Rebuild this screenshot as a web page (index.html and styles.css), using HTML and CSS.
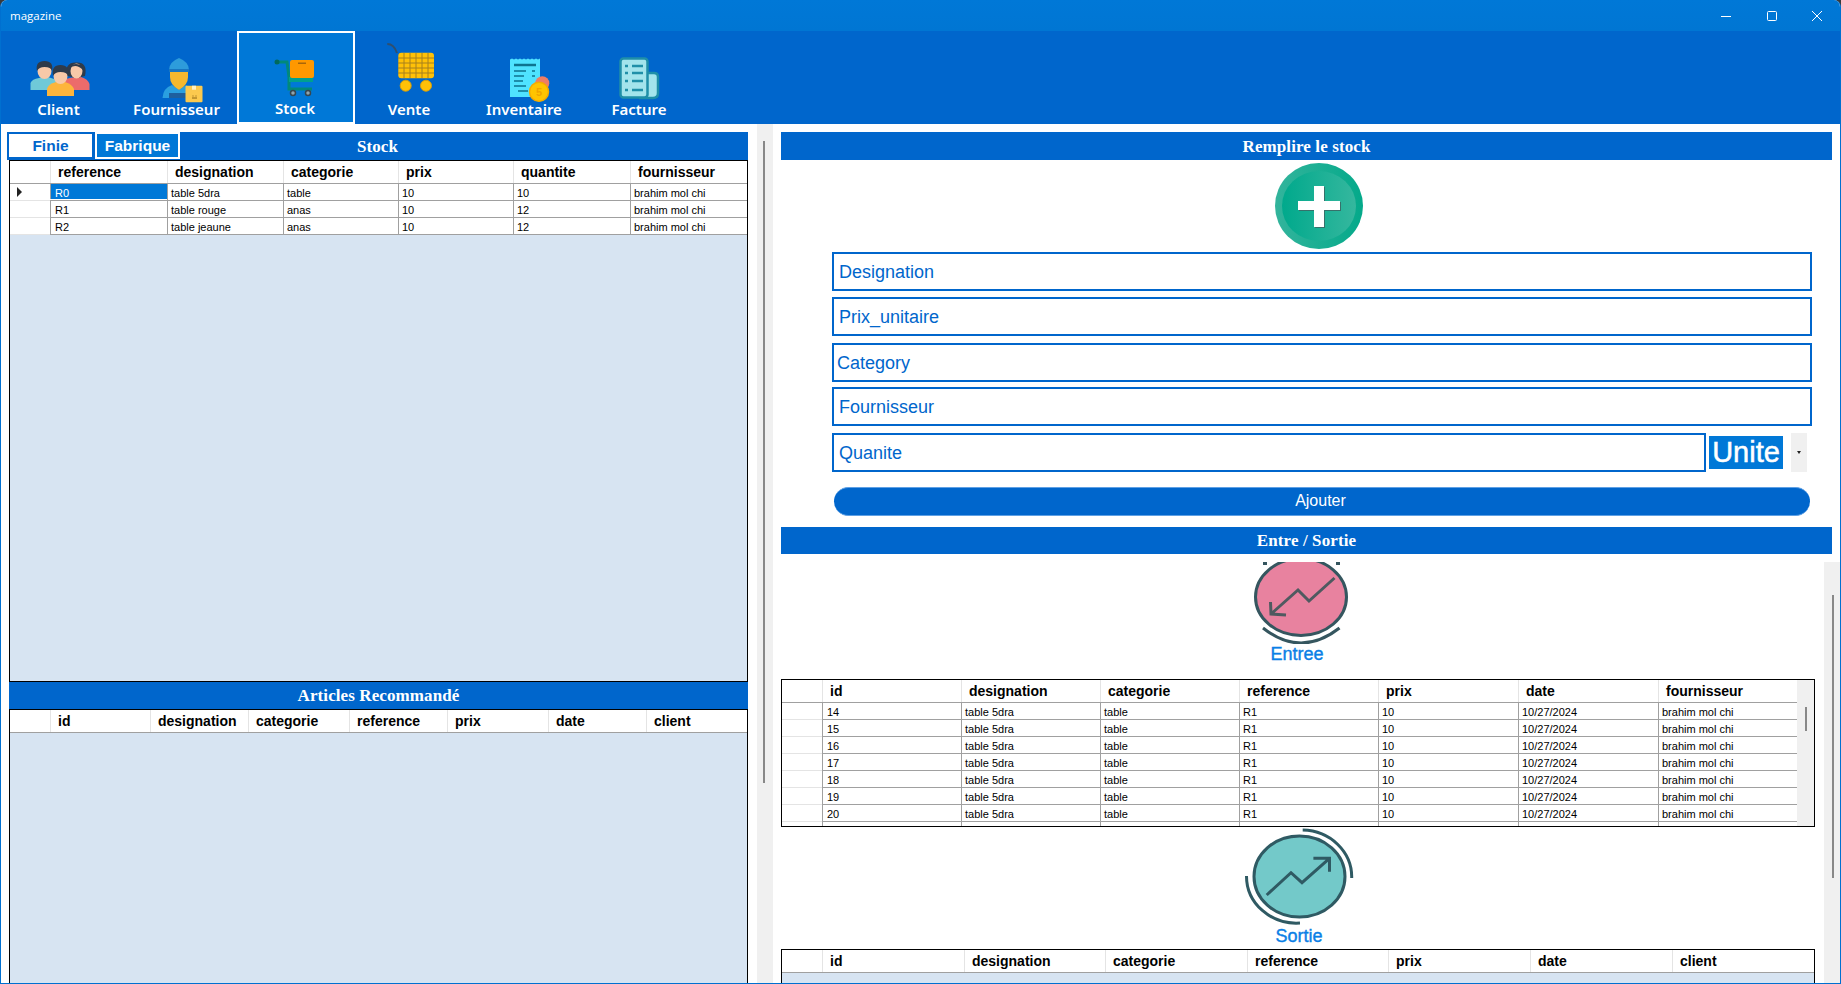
FILE: index.html
```html
<!DOCTYPE html>
<html lang="fr">
<head>
<meta charset="utf-8">
<title>magazine</title>
<link rel="stylesheet" href="styles.css">
</head>
<body>
<div class="app">
  <header class="titlebar">
    <span class="title">magazine</span>
    <div class="winctl">
      <span class="winbtn"><svg width="10" height="10" viewBox="0 0 10 10"><path d="M0 5.5H10" stroke="#fff" fill="none"/></svg></span>
      <span class="winbtn"><svg width="10" height="10" viewBox="0 0 10 10"><rect x=".5" y=".5" width="9" height="9" rx="1" stroke="#fff" fill="none"/></svg></span>
      <span class="winbtn"><svg width="10" height="10" viewBox="0 0 10 10"><path d="M0 0L10 10M10 0L0 10" stroke="#fff" fill="none"/></svg></span>
    </div>
  </header>

  <nav class="nav">
    <div class="tab t-client">
      <svg class="navicon" viewBox="0 0 60 57">
        <path d="M32 47V39Q33 36 40 35L45 34H51Q58 36 59.500 41V47Z" fill="#ec6b6b"/>
        <path d="M37 33Q34 19 46.500 19.500Q58 19 55 33L51 34Q46 36 42 34Z" fill="#2f3b4a"/>
        <ellipse cx="46.500" cy="28" rx="6" ry="7.500" fill="#f8c9a8"/>
        <path d="M40 25Q46 20 53 27Q54 21 46 21Q40 21 40 25Z" fill="#2f3b4a"/>
        <path d="M.5 47V40Q2 36 9 35L12 34H18L24 36Q28 38 28 47Z" fill="#6fc9d8"/>
        <ellipse cx="14.500" cy="28" rx="7" ry="8" fill="#f8c9a8"/>
        <path d="M7 28Q5 18 14.500 18Q24 18 22 28Q21 24 14.500 24Q9 24 7 28Z" fill="#2f3b4a"/>
        <path d="M17 53V46Q18 41 26 39H35Q42 41 44 46V53Z" fill="#fdb53c"/>
        <ellipse cx="30.500" cy="33" rx="7" ry="8" fill="#f8c9a8"/>
        <path d="M23 33Q21 22 30.500 22Q40 22 38 33Q37 29 30.500 29Q25 29 23 33Z" fill="#2f3b4a"/>
      </svg>
      <span class="tablabel">Client</span>
    </div>
    <div class="tab t-four">
      <svg class="navicon" viewBox="0 0 60 57">
        <path d="M14.500 55Q15 45 24 42L31 47L38 42Q42 44 44 47V55Z" fill="#2a9fe0"/>
        <rect x="21" y="50" width="17" height="5" fill="#1e5f9e"/>
        <path d="M22 27H40V34Q40 42 31 47Q22 42 22 34Z" fill="#f5b82e"/>
        <path d="M21 27Q21 19 31 15Q41 19 41 27Z" fill="#2d9cdb"/>
        <rect x="21" y="26" width="20" height="3" fill="#1976c0"/>
        <rect x="37.500" y="42.700" width="17" height="16.600" rx="1" fill="#fbc94e"/>
        <rect x="44" y="42.700" width="4" height="4" fill="#fff0c0"/>
        <path d="M44 55H49M45 52.500V53.500M48 52.500V53.500" stroke="#8a6414" fill="none"/>
      </svg>
      <span class="tablabel">Fournisseur</span>
    </div>
    <div class="tab t-stock active">
      <svg class="navicon" viewBox="0 0 60 57">
        <path d="M12 19H21L23 34V46H46" stroke="#00897b" stroke-width="3" fill="none"/>
        <circle cx="11" cy="19" r="2.500" fill="#00695c"/>
        <rect x="23" y="34" width="24" height="5" fill="#00a08f"/>
        <rect x="24" y="17" width="24" height="18" rx="2" fill="#ff9800"/>
        <rect x="32" y="19.500" width="8" height="1.500" fill="#a8660a"/>
        <circle cx="27" cy="50" r="2.500" fill="#90a4ae" stroke="#37474f" stroke-width="1.500"/>
        <circle cx="42" cy="50" r="2.500" fill="#90a4ae" stroke="#37474f" stroke-width="1.500"/>
      </svg>
      <span class="tablabel">Stock</span>
    </div>
    <div class="tab t-vente">
      <svg class="navicon" viewBox="0 0 60 57">
        <path d="M8.300 1Q15 1 18 10" stroke="#2f4f6f" stroke-width="2" fill="none"/>
        <rect x="19.300" y="9.700" width="35.700" height="25.600" rx="3" fill="#ffc107"/>
        <path d="M25 10V35M31 10V35M37 10V35M43 10V35M49 10V35M19 15H55M19 20H55M19 25H55M19 30H55" stroke="#a6801e" fill="none"/>
        <circle cx="26.700" cy="42.700" r="5.500" fill="#ffc107" stroke="#d99f0a"/>
        <circle cx="47" cy="42.700" r="5.500" fill="#ffc107" stroke="#d99f0a"/>
      </svg>
      <span class="tablabel">Vente</span>
    </div>
    <div class="tab t-inv">
      <svg class="navicon" viewBox="0 0 60 57">
        <path d="M16 16.500L18 15.500L20 16.500L22 15.500L24 16.500L26 15.500L28 16.500L30 15.500L32 16.500L34 15.500L36 16.500L38 15.500L40 16.500L42 15.500L44 16.500L46 15.500V54H16Z" fill="#4fe3ff"/>
        <path d="M20 22H42" stroke="#0e7490" stroke-width="2.500" fill="none"/>
        <path d="M20 28H32M38 28H41M20 33H30M38 33H41M20 38H29M20 43H32M24 48H34" stroke="#0e7490" stroke-width="1.700" fill="none"/>
        <circle cx="48.300" cy="40.300" r="7" fill="#ef7d64"/>
        <circle cx="45" cy="48.700" r="9.500" fill="#ffc400" stroke="#f5ab00" stroke-width="1.500"/>
        <text class="coin" x="45" y="53">5</text>
      </svg>
      <span class="tablabel">Inventaire</span>
    </div>
    <div class="tab t-fact">
      <svg class="navicon" viewBox="0 0 60 57">
        <path d="M39 30H45Q49 30 49 34V50Q49 55 44 55H30" fill="#a3e4ec" stroke="#1f8fa8" stroke-width="2.500"/>
        <rect x="11.500" y="15.500" width="27" height="39" rx="3" fill="#a3e4ec" stroke="#1f8fa8" stroke-width="2.500"/>
        <path d="M16 23H19M23 23H34M16 30H19M23 30H34M16 38H19M23 38H34M16 47H19M23 47H34" stroke="#1f8fa8" stroke-width="2.300" fill="none"/>
      </svg>
      <span class="tablabel">Facture</span>
    </div>
  </nav>

  <main class="main">
    <section class="left">
      <div class="bar bar-stock">
        <div class="modes">
          <span class="mode mode-on">Finie</span>
          <span class="mode mode-off">Fabrique</span>
        </div>
        <span class="bar-title">Stock</span>
      </div>
      <div class="grid grid-stock">
        <div class="row head cols-stock">
          <span class="corner"></span><b>reference</b><b>designation</b><b>categorie</b><b>prix</b><b>quantite</b><b>fournisseur</b>
        </div>
        <div class="row cols-stock">
          <span class="rowh"><i class="arrow"></i></span><span class="sel">R0</span><span>table 5dra</span><span>table</span><span>10</span><span>10</span><span>brahim mol chi</span>
        </div>
        <div class="row cols-stock">
          <span class="rowh"></span><span class="first">R1</span><span>table rouge</span><span>anas</span><span>10</span><span>12</span><span>brahim mol chi</span>
        </div>
        <div class="row cols-stock">
          <span class="rowh"></span><span class="first">R2</span><span>table jeaune</span><span>anas</span><span>10</span><span>12</span><span>brahim mol chi</span>
        </div>
      </div>
      <div class="bar bar-reco"><span class="bar-title">Articles Recommandé</span></div>
      <div class="grid grid-reco">
        <div class="row head cols-reco">
          <span class="corner"></span><b>id</b><b>designation</b><b>categorie</b><b>reference</b><b>prix</b><b>date</b><b>client</b>
        </div>
      </div>
    </section>

    <div class="splitter"><span class="splitline"></span></div>

    <section class="right">
      <div class="form">
        <div class="bar"><span class="bar-title">Remplire le stock</span></div>
        <svg class="plus" viewBox="0 0 88 86">
          <defs>
            <linearGradient id="pg" x1="0" x2="1" y1="0" y2="0">
              <stop offset="0" stop-color="#00a98c"/>
              <stop offset="1" stop-color="#35b79e"/>
            </linearGradient>
            <linearGradient id="po" x1="0" x2="1" y1="0" y2="0">
              <stop offset="0" stop-color="#33b49c"/>
              <stop offset="1" stop-color="#04a98a"/>
            </linearGradient>
          </defs>
          <ellipse cx="44" cy="43" rx="44" ry="43" fill="url(#po)"/>
          <ellipse cx="44" cy="43" rx="37" ry="35" fill="url(#pg)"/>
          <path d="M39 23H49V38H65V47H49V64H39V47H23V38H39Z" fill="#37706a" transform="translate(1 1)"/>
          <path d="M39 23H49V38H65V47H49V64H39V47H23V38H39Z" fill="#fff"/>
        </svg>
        <div class="fields">
          <div class="field">Designation</div>
          <div class="field">Prix_unitaire</div>
          <div class="field field-cat">Category</div>
          <div class="field field-four">Fournisseur</div>
          <div class="qty">
            <div class="field field-qty">Quanite</div>
            <div class="unit">Unite</div>
            <div class="drop"><i class="droparrow"></i></div>
          </div>
        </div>
        <div class="add">Ajouter</div>
        <div class="bar bar-io"><span class="bar-title">Entre / Sortie</span></div>
      </div>

      <div class="scroller">
        <div class="scrollbody">
          <svg class="trend-in" viewBox="0 0 110 82">
            <path d="M17 1.500H21M90 1.500H94" stroke="#35565f" stroke-width="3" fill="none"/>
            <ellipse cx="55" cy="35" rx="45.500" ry="38.500" fill="#e8829f" stroke="#35565f" stroke-width="3"/>
            <path d="M17 66Q55 96 93.500 66" stroke="#35565f" stroke-width="3" fill="none"/>
            <path d="M88.500 16L63 39L52 28L25 52M24.500 40L25 52L40 53" stroke="#4f5a60" stroke-width="3" fill="none"/>
          </svg>
          <div class="trend-label lab-in">Entree</div>

          <div class="grid grid-in">
            <div class="grid-rows">
              <div class="row head cols-in">
                <span class="corner"></span><b>id</b><b>designation</b><b>categorie</b><b>reference</b><b>prix</b><b>date</b><b>fournisseur</b>
              </div>
              <div class="row cols-in"><span class="rowh"></span><span class="first">14</span><span>table 5dra</span><span>table</span><span>R1</span><span>10</span><span>10/27/2024</span><span>brahim mol chi</span></div>
              <div class="row cols-in"><span class="rowh"></span><span class="first">15</span><span>table 5dra</span><span>table</span><span>R1</span><span>10</span><span>10/27/2024</span><span>brahim mol chi</span></div>
              <div class="row cols-in"><span class="rowh"></span><span class="first">16</span><span>table 5dra</span><span>table</span><span>R1</span><span>10</span><span>10/27/2024</span><span>brahim mol chi</span></div>
              <div class="row cols-in"><span class="rowh"></span><span class="first">17</span><span>table 5dra</span><span>table</span><span>R1</span><span>10</span><span>10/27/2024</span><span>brahim mol chi</span></div>
              <div class="row cols-in"><span class="rowh"></span><span class="first">18</span><span>table 5dra</span><span>table</span><span>R1</span><span>10</span><span>10/27/2024</span><span>brahim mol chi</span></div>
              <div class="row cols-in"><span class="rowh"></span><span class="first">19</span><span>table 5dra</span><span>table</span><span>R1</span><span>10</span><span>10/27/2024</span><span>brahim mol chi</span></div>
              <div class="row cols-in"><span class="rowh"></span><span class="first">20</span><span>table 5dra</span><span>table</span><span>R1</span><span>10</span><span>10/27/2024</span><span>brahim mol chi</span></div>
              <div class="row cols-in"><span class="rowh"></span><span class="first"></span><span></span><span></span><span></span><span></span><span></span><span></span></div>
            </div>
            <div class="vbar"><span class="vthumb"></span></div>
          </div>

          <svg class="trend-out" viewBox="0 0 120 98">
            <path d="M62.700 2A50 47 0 0 1 111.700 50M6.500 48A50 47 0 0 0 60 95" stroke="#2f5a63" stroke-width="3" fill="none"/>
            <ellipse cx="59.500" cy="48.500" rx="45.500" ry="40.500" fill="#73c9c9" stroke="#2f5a63" stroke-width="3"/>
            <path d="M26.700 67L51 44.700L62 54.700L89.500 30.300M73.400 30.300H89.500V43.700" stroke="#2f5a63" stroke-width="3" fill="none"/>
          </svg>
          <div class="trend-label lab-out">Sortie</div>

          <div class="grid grid-out">
            <div class="row head cols-out">
              <span class="corner"></span><b>id</b><b>designation</b><b>categorie</b><b>reference</b><b>prix</b><b>date</b><b>client</b>
            </div>
          </div>
        </div>
        <div class="pagebar"><span class="pagethumb"></span></div>
      </div>
    </section>
  </main>
</div>
</body>
</html>
```

FILE: styles.css
```css
* { box-sizing: border-box; }
html, body { margin: 0; height: 100%; background: #3a3a3a; }
body { overflow: hidden; }
.app {
  width: 1841px; height: 984px;
  display: flex; flex-direction: column;
  background: #fff;
  border: 1px solid #0070d0;
  border-top: 0;
  border-radius: 7px 7px 0 0;
  overflow: hidden;
  font-family: "Liberation Sans", Arial, sans-serif;
}

/* title bar */
.titlebar {
  height: 31px; flex: none;
  display: flex; align-items: center; justify-content: space-between;
  background: linear-gradient(#0078d7, #0076d3);
  color: #fff;
  padding-left: 9px;
}
.title { font: 11.5px "Open Sans", sans-serif; }
.winctl { display: flex; }
.winbtn { width: 45.500px; height: 31px; display: flex; align-items: center; justify-content: center; }
.winbtn svg { display: block; }

/* nav */
.nav { height: 93px; flex: none; display: flex; background: #0066cc; }
.tab {
  display: flex; flex-direction: column; align-items: center;
  padding-top: 12px;
  color: #fff;
}
.t-client { width: 115px; }
.t-four { width: 121px; }
.t-stock { width: 118px; }
.t-vente { width: 108px; }
.t-inv { width: 122px; }
.t-fact { width: 108px; }
.active { background: #0078d7; border: 2px solid #fff; padding-top: 10px; }
.navicon { width: 60px; height: 57px; display: block; overflow: visible; flex: none; }
.t-client .navicon, .t-four .navicon { margin-left: 2px; }
.tablabel { font: 600 15px/16px "Noto Sans", sans-serif; white-space: nowrap; margin-top: 1px; }
.active .tablabel { margin: 0 2px 0 0; }
.coin { font: bold 11px "Liberation Sans", sans-serif; fill: #f0a400; text-anchor: middle; }

/* main */
.main { flex: 1; min-height: 0; display: flex; }
.left { width: 741px; margin-left: 6px; padding-top: 8px; display: flex; flex-direction: column; flex: none; }
.splitter { width: 16px; margin-left: 9px; background: #f0f0f0; flex: none; padding: 17px 0 0 6px; }
.splitline { display: block; width: 2px; height: 642px; background: #888; }
.right { flex: 1; min-width: 0; display: flex; flex-direction: column; padding-top: 8px; }

/* bars */
.bar {
  height: 28px; flex: none;
  display: grid; align-items: center; justify-items: center;
  background: #0066cc; color: #fff;
}
.bar > * { grid-area: 1 / 1; }
.bar-title { font: bold 17px/1 "Liberation Serif", serif; letter-spacing: .1px; }
.bar-reco { height: 29px; margin-left: 2px; border-top: 1px solid #000; border-bottom: 1px solid #000; }
.modes { justify-self: start; display: flex; align-self: stretch; }
.mode {
  font: bold 15.500px/1 "Liberation Sans", sans-serif;
  display: flex; align-items: center; justify-content: center;
}
.mode-on { width: 87px; height: 27px; background: #fff; color: #0066cc; border: 2px solid #0066cc; }
.mode-off { width: 85px; margin-left: 1px; height: 27px; background: #0078d7; color: #fff; border: 2px solid #fff; }

/* data grids */
.grid { background: #d7e4f2; border: 1px solid #000; overflow: hidden; }
.grid-stock { height: 521px; margin-left: 2px; flex: none; border-bottom: 0; }
.grid-reco { flex: 1; margin-left: 2px; border-top: 0; border-bottom: 0; }
.row {
  display: grid; height: 17px;
  background: #fff;
  font-size: 11px; line-height: 17px; color: #000;
  border-bottom: 1px solid #a0a0a0;
}
.row > span { padding: 1px 0 0 3px; border-left: 1px solid #a0a0a0; white-space: nowrap; overflow: hidden; }
.row > .rowh { border-left: 0; padding: 0; display: flex; align-items: center; border-bottom: 1px solid #e4e4e4; margin-bottom: -1px; background: #fff; }
.row > .first { padding-left: 4px; }
.row > .sel { background: #0078d7; color: #fff; padding-left: 4px; margin-bottom: 1px; }
.head { height: 23px; font-size: 14px; line-height: 23px; border-bottom: 1px solid #a0a0a0; }
.head b { padding-left: 7px; border-left: 1px solid #e4e4e4; white-space: nowrap; overflow: hidden; }
.head > .corner { border-left: 0; padding: 0; border-right: 1px solid #a0a0a0; margin-right: -1px; }
.arrow { display: block; margin-left: 7px; width: 0; height: 0; border-left: 5px solid #222; border-top: 5px solid transparent; border-bottom: 5px solid transparent; }

.cols-stock { grid-template-columns: 40px 117px 116px 115px 115px 117px 117px; }
.cols-reco { grid-template-columns: 40px 100px 98px 101px 98px 101px 98px 101px; }
.cols-in { grid-template-columns: 40px 139px 139px 139px 139px 140px 140px 139px; }
.cols-out { grid-template-columns: 40px 142px 141px 142px 141px 142px 142px 143px; }

/* form */
.form { flex: none; padding: 0 8px; }
.plus { display: block; width: 88px; height: 86px; margin: 3px 0 0 494px; }
.fields { margin: 3px 0 0 51px; width: 980px; display: flex; flex-direction: column; gap: 6px; }
.field {
  height: 39px;
  border: 2px solid #0066cc;
  color: #0066cc;
  font-size: 18px; line-height: 36px;
  padding-left: 5px;
}
.field-cat { margin-top: 1px; padding-left: 3px; line-height: 37px; overflow: hidden; }
.field-four { margin-top: -1px; line-height: 37px; }
.qty { display: flex; align-items: center; margin-top: 1px; }
.field-qty { width: 874px; }
.unit {
  width: 74px; height: 33px; margin-left: 3px;
  background: #0078d7; color: #fff;
  font-size: 29px; line-height: 33px; text-align: center;
  -webkit-text-stroke: .5px #fff;
}
.drop { width: 16px; height: 39px; margin-left: 8px; background: #f0f0f0; display: flex; align-items: center; justify-content: center; }
.droparrow { width: 0; height: 0; border-top: 3px solid #222; border-left: 2px solid transparent; border-right: 2px solid transparent; }
.add {
  width: 976px; height: 29px; margin: 15px 0 0 53px;
  background: #0066cc; color: #fff;
  border-top: 1px solid #5fa0e4; border-bottom: 1px solid #5fa0e4;
  border-radius: 15px;
  font-size: 16px; line-height: 26px; text-align: center;
  padding-right: 3px;
}
.bar-io { height: 27px; margin-top: 11px; }

/* scrolling part */
.scroller { flex: 1; min-height: 0; display: flex; padding-top: 8px; }
.scrollbody { width: 1043px; margin-left: 8px; flex: none; overflow: hidden; }
.pagebar { width: 16px; flex: none; background: #f0f0f0; padding: 33px 0 0 8px; }
.pagethumb { display: block; width: 2px; height: 283px; background: #888; }
.trend-in { display: block; width: 110px; height: 82px; margin-left: 465px; }
.trend-out { display: block; width: 120px; height: 98px; margin: 1px 0 0 459px; overflow: visible; }
.trend-label { font-size: 18px; line-height: 20px; color: #0a7fe6; width: 110px; text-align: center; -webkit-text-stroke: .4px #0a7fe6; }
.lab-in { margin: 0 0 0 461px; }
.lab-out { margin: 0 0 0 463px; }
.grid-in { width: 1034px; height: 148px; margin-top: 15px; display: flex; background: #fff; }
.grid-rows { width: 1015px; flex: none; }
.vbar { flex: 1; background: #f0f0f0; padding: 27px 0 0 8px; }
.vthumb { display: block; width: 2px; height: 24px; background: #888; }
.grid-out { width: 1034px; height: 60px; margin-top: 3px; }
```
